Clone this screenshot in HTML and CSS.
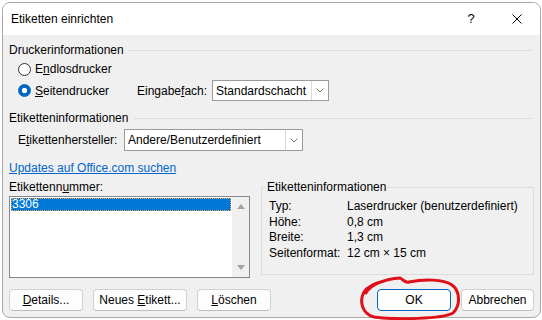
FILE: index.html
```html
<!DOCTYPE html>
<html lang="de">
<head>
<meta charset="utf-8">
<title>Etiketten einrichten</title>
<link rel="stylesheet" href="styles.css">
</head>
<body>
<div class="window">
	<div class="titlebar">
		<span class="title">Etiketten einrichten</span>
		<span class="tb_btn help">?</span>
		<span class="tb_btn close">
			<svg width="10" height="10" viewBox="0 0 10 10"><path d="M0.5 0.5 L9.5 9.5 M9.5 0.5 L0.5 9.5" stroke="#000" stroke-width="1"/></svg>
		</span>
	</div>
	<div class="content">
		<div class="group_head"><span>Druckerinformationen</span></div>
		<div class="radio_row">
			<label class="radio"><span class="dot"></span><span>E<u>n</u>dlosdrucker</span></label>
		</div>
		<div class="radio_row row_two">
			<label class="radio"><span class="dot on"></span><span><u>S</u>eitendrucker</span></label>
			<span class="field_label lbl_fach">Eingabe<u>f</u>ach:</span>
			<div class="combo combo_fach">
				<span class="combo_text">Standardschacht</span>
				<span class="combo_btn"><svg width="8" height="5" viewBox="0 0 8 5"><path d="M0.5 0.5 L4 4 L7.5 0.5" fill="none" stroke="#707070" stroke-width="1"/></svg></span>
			</div>
		</div>
		<div class="group_head head_two"><span>Etiketteninformationen</span></div>
		<div class="maker_row">
			<span class="field_label lbl_maker">E<u>t</u>ikettenhersteller:</span>
			<div class="combo combo_maker">
				<span class="combo_text">Andere/Benutzerdefiniert</span>
				<span class="combo_btn"><svg width="8" height="5" viewBox="0 0 8 5"><path d="M0.5 0.5 L4 4 L7.5 0.5" fill="none" stroke="#707070" stroke-width="1"/></svg></span>
			</div>
		</div>
		<a class="link" href="">Updates auf Office.com suchen</a>
		<div class="lower">
			<div class="list_col">
				<div class="list_label">Etikettenn<u>u</u>mmer:</div>
				<div class="listbox">
					<div class="list_items"><div class="item on">3306</div></div>
					<div class="scrollbar"><span class="arrow up"></span><span class="arrow down"></span></div>
				</div>
			</div>
			<fieldset class="info">
				<legend>Etiketteninformationen</legend>
				<div class="info_rows">
					<span>Typ:</span><span>Laserdrucker (benutzerdefiniert)</span>
					<span>Höhe:</span><span>0,8 cm</span>
					<span>Breite:</span><span>1,3 cm</span>
					<span>Seitenformat:</span><span>12 cm × 15 cm</span>
				</div>
			</fieldset>
		</div>
		<div class="buttons">
			<span class="btn btn_small"><u>D</u>etails...</span>
			<span class="btn btn_wide">Neues <u>E</u>tikett...</span>
			<span class="btn btn_small"><u>L</u>öschen</span>
			<span class="btn btn_ok">OK</span>
			<span class="btn btn_cancel">Abbrechen</span>
		</div>
	</div>
</div>
<!-- rote Markierung um OK -->
<svg class="mark" width="542" height="320" viewBox="0 0 542 320">
	<path d="M366 293 C370 284, 386 279, 400 278 C404 280, 405 283, 409 282 C424 279, 443 279, 452 285 C460 291, 461 305, 453 313 C443 319, 395 320, 374 317 C362 314, 359 301, 364 292 C368 286, 376 283, 384 281" fill="none" stroke="#e0101a" stroke-width="3" stroke-linecap="round"/>
</svg>
</body>
</html>
```

FILE: styles.css
```css
* {margin:0; padding:0; box-sizing:border-box}
body {
	position: relative;
	width: 542px;
	height: 320px;
	overflow: hidden;
	background-color: #fff;
	font-family: "Liberation Sans", Arial, sans-serif;
	font-size: 12px;
	color: #000;
}
u {text-underline-offset: 1px}

.window {
	display: flex;
	flex-direction: column;
	width: 539px;
	height: 316px;
	margin: 2px 0 0 2px;
	border: 1px solid #a8a8a8;
	border-radius: 8px;
	background-color: #f0f0f0;
	overflow: hidden;
}
.titlebar {
	display: flex;
	align-items: center;
	height: 32px;
	padding-left: 8px;
	background-color: #fff;
}
.title {flex: 1}
.tb_btn {
	display: flex;
	align-items: center;
	justify-content: center;
	width: 46px;
	height: 32px;
}
.help {font-size: 13px; padding-bottom: 1px}

.content {padding: 7px 6px 0 6px}

.group_head {
	display: flex;
	align-items: center;
	line-height: 16px;
}
.group_head::after {
	content: '';
	flex: 1;
	margin: 0 2px 0 5px;
	border-top: 1px solid #dcdcdc;
}
.head_two {margin-top: 9px}

.radio_row {
	display: flex;
	align-items: center;
	height: 20px;
	margin-top: 1px;
	padding-left: 9px;
}
.row_two {height: 21px}
.radio {
	display: flex;
	align-items: center;
	width: 119px;
}
.dot {
	width: 13px;
	height: 13px;
	margin-right: 4px;
	border: 1px solid #333;
	border-radius: 50%;
	background-color: #fff;
}
.dot.on {
	border-color: #0067c0;
	background: radial-gradient(circle, #fff 0 2.4px, #0067c0 3px);
}

.field_label {flex: none}
.lbl_fach {width: 75px}
.lbl_maker {width: 106px}

.combo {
	display: flex;
	height: 21px;
	border: 1px solid #9a9a9a;
	background-color: #fff;
}
.combo_fach {width: 117px}
.combo_maker {width: 179px; height: 22px}
.combo_text {
	flex: 1;
	display: flex;
	align-items: center;
	padding-left: 3px;
	white-space: nowrap;
}
.combo_btn {
	display: flex;
	align-items: center;
	justify-content: center;
	width: 17px;
	border-left: 1px solid #dadada;
}

.maker_row {
	display: flex;
	align-items: center;
	margin-top: 3px;
	padding-left: 9px;
}

.link {
	display: block;
	width: fit-content;
	margin-top: 9px;
	line-height: 16px;
	color: #0066cc;
}

.lower {
	display: flex;
	margin-top: 3px;
}
.list_col {width: 241px}
.list_label {line-height: 16px; margin-bottom: 1px}
.listbox {
	display: flex;
	height: 82px;
	border: 1px solid #828790;
	background-color: #fff;
}
.list_items {flex: 1; padding: 1px}
.item {
	height: 13px;
	line-height: 11px;
	color: #fff;
	background-color: #0078d7;
	border: 1px dotted #f9a23a;
}
.scrollbar {
	display: flex;
	flex-direction: column;
	justify-content: space-between;
	align-items: center;
	width: 17px;
	padding: 7px 0;
	background-color: #f0f0f0;
}
.arrow {
	width: 0;
	height: 0;
	border-left: 4px solid transparent;
	border-right: 4px solid transparent;
}
.arrow.up {border-bottom: 5px solid #a3a3a3}
.arrow.down {border-top: 5px solid #a3a3a3}

.info {
	flex: 1;
	min-width: 0;
	margin: 0 0 3px 11px;
	padding: 4px 6px 0 3px;
	border: 1px solid #dcdcdc;
}
.info legend {padding: 0 2px; line-height: 16px}
.info_rows {
	display: grid;
	grid-template-columns: 78px auto;
	padding-left: 4px;
	line-height: 15.5px;
}

.buttons {
	display: flex;
	gap: 10px;
	margin-top: 11px;
}
.btn {
	display: block;
	height: 22px;
	line-height: 20px;
	text-align: center;
	white-space: nowrap;
	border: 1px solid #d0d0d0;
	border-bottom-color: #bdbdbd;
	border-radius: 4px;
	background-color: #fdfdfd;
}
.btn_small {width: 74px}
.btn_wide {width: 94px}
.btn_ok {
	width: 74px;
	margin-left: auto;
	border-color: #0067c0;
}
.btn_cancel {width: 73px}

.mark {
	position: absolute;
	left: 0;
	top: 0;
	pointer-events: none;
}
```
